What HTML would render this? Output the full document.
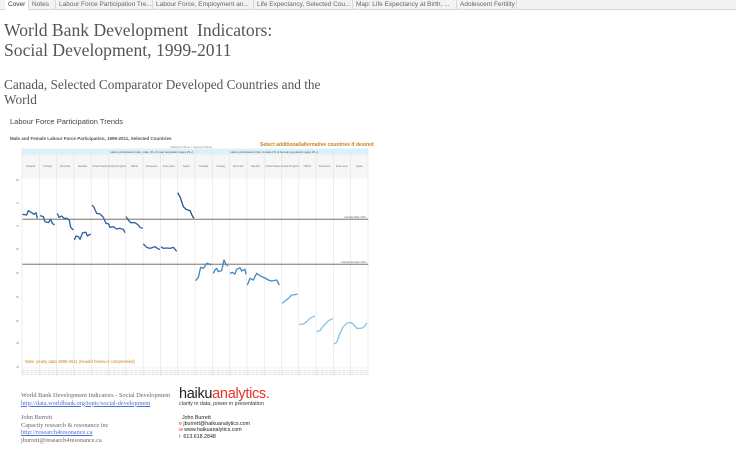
<!DOCTYPE html>
<html><head><meta charset="utf-8"><style>
*{margin:0;padding:0;box-sizing:border-box}
body{width:736px;height:454px;background:#fff;position:relative;overflow:hidden;font-family:"Liberation Sans",sans-serif}
.tabs{position:absolute;left:0;top:0;width:736px;height:10px;background:#f3f3f3;border-bottom:1px solid #d8d8d8;font-size:6.5px;color:#666;white-space:nowrap}
.tab{position:absolute;top:0;height:10px;line-height:9px;padding-left:3px;border-right:1px solid #d8d8d8}
.t{position:absolute;font-family:"Liberation Serif",serif;color:#555;white-space:nowrap}
</style></head><body>
<div class="tabs">
<div class="tab" style="left:5px;width:24px;background:#fff;color:#333">Cover</div>
<div class="tab" style="left:29px;width:27px">Notes</div>
<div class="tab" style="left:56px;width:97px">Labour Force Participation Tre...</div>
<div class="tab" style="left:153px;width:101px">Labour Force, Employment an...</div>
<div class="tab" style="left:254px;width:99px">Life Expectancy, Selected Cou...</div>
<div class="tab" style="left:353px;width:104px">Map: Life Expectancy at Birth, ...</div>
<div class="tab" style="left:457px;width:60px">Adolescent Fertility</div>
</div>
<div class="t" style="left:4px;top:21px;font-size:17.6px;line-height:19.5px">World Bank Development&nbsp; Indicators:<br>Social Development, 1999-2011</div>
<div class="t" style="left:4px;top:77px;font-size:13.3px;line-height:15px">Canada, Selected Comparator Developed Countries and the<br>World</div>
<div style="position:absolute;left:10px;top:117px;font-size:7.5px;color:#444">Labour Force Participation Trends</div>
<div style="position:absolute;left:10px;top:136px;font-size:4.5px;color:#555;font-weight:bold">Male and Female Labour Force Participation, 1999-2011, Selected Countries</div>
<div style="position:absolute;left:170px;top:145px;font-size:3px;color:#888">Indicator Name / Country Name</div>
<div style="position:absolute;left:260px;top:142px;font-size:5px;color:#c8801c;font-weight:bold">Select additional/alternative countries if desired</div>
<svg style="position:absolute;left:10px;top:140px" width="370" height="240" viewBox="0 0 370 240">
<rect x="12" y="8.5" width="346" height="6" fill="#dcf0f8"/>
<rect x="12" y="14.5" width="346" height="24" fill="#f6f6f6"/>
<text x="100" y="13" font-size="3" fill="#555" font-family="Liberation Sans">Labor participation rate, male (% of male population ages 15+)</text>
<text x="220" y="13" font-size="3" fill="#555" font-family="Liberation Sans">Labor participation rate, female (% of female population ages 15+)</text>
<g stroke="#e2e2e2" stroke-width="0.6">
<line x1="12" y1="8" x2="12" y2="237"/><line x1="29.3" y1="14" x2="29.3" y2="237"/><line x1="46.6" y1="14" x2="46.6" y2="237"/><line x1="63.9" y1="14" x2="63.9" y2="237"/><line x1="81.2" y1="14" x2="81.2" y2="237"/><line x1="98.5" y1="14" x2="98.5" y2="237"/><line x1="115.8" y1="14" x2="115.8" y2="237"/><line x1="133.1" y1="14" x2="133.1" y2="237"/><line x1="150.4" y1="14" x2="150.4" y2="237"/><line x1="167.7" y1="14" x2="167.7" y2="237"/><line x1="185" y1="8" x2="185" y2="237"/><line x1="202.3" y1="14" x2="202.3" y2="237"/><line x1="219.6" y1="14" x2="219.6" y2="237"/><line x1="236.9" y1="14" x2="236.9" y2="237"/><line x1="254.2" y1="14" x2="254.2" y2="237"/><line x1="271.5" y1="14" x2="271.5" y2="237"/><line x1="288.8" y1="14" x2="288.8" y2="237"/><line x1="306.1" y1="14" x2="306.1" y2="237"/><line x1="323.4" y1="14" x2="323.4" y2="237"/><line x1="340.7" y1="14" x2="340.7" y2="237"/><line x1="358" y1="8" x2="358" y2="237"/>
<line x1="12" y1="228" x2="358" y2="228"/>
</g>
<g font-size="2.6" fill="#777" font-family="Liberation Sans" text-anchor="middle">
<text x="20.6" y="27">Canada</text><text x="37.9" y="27">Norway</text><text x="55.2" y="27">Denmark</text><text x="72.5" y="27">Sweden</text><text x="89.8" y="27">United States</text><text x="107.1" y="27">United Kingdom</text><text x="124.4" y="27">OECD</text><text x="141.7" y="27">European</text><text x="159" y="27">Euro area</text><text x="176.3" y="27">Japan</text>
<text x="193.6" y="27">Canada</text><text x="210.9" y="27">Norway</text><text x="228.2" y="27">Denmark</text><text x="245.5" y="27">Sweden</text><text x="262.8" y="27">United States</text><text x="280.1" y="27">United Kingdom</text><text x="297.4" y="27">OECD</text><text x="314.7" y="27">European</text><text x="332" y="27">Euro area</text><text x="349.3" y="27">Japan</text>
</g>
<g font-size="2.6" fill="#888" font-family="Liberation Sans" text-anchor="end">
<text x="9" y="41">80</text><text x="9" y="64">75</text><text x="9" y="87">70</text><text x="9" y="110">65</text><text x="9" y="134">60</text><text x="9" y="158">55</text><text x="9" y="182">50</text><text x="9" y="204">45</text><text x="9" y="228">40</text>
</g>
<text x="356" y="78" font-size="2.6" fill="#666" text-anchor="end" font-family="Liberation Sans">Canada Male 2011</text>
<text x="356" y="123" font-size="2.6" fill="#666" text-anchor="end" font-family="Liberation Sans">Canada Female 2011</text>
<text x="15" y="223" font-size="4.2" fill="#c8801c" font-family="Liberation Sans">Note: yearly data 1999-2011 (header below is compressed)</text>
<path d="M12 230.5H358M12 232.5H358M12 234.5H358" stroke="#bbb" stroke-width="0.8" stroke-dasharray="0.6 0.7"/>
</svg>
<svg style="position:absolute;left:10px;top:170px" width="370" height="210" viewBox="0 0 1110 630" fill="none" stroke-width="4" stroke-linejoin="round">
<line x1="37" y1="148" x2="1075" y2="148" stroke="#999" stroke-width="4"/>
<line x1="37" y1="283" x2="1075" y2="283" stroke="#999" stroke-width="4"/>
<g stroke="#2f629e">
<polyline points="37,133 50,135 55,122 65,128 72,133 78,128 82,145"/>
<polyline points="90,137 100,140 105,155 115,158 122,148 127,160 134,165"/>
<polyline points="142,130 147,142 155,138 162,145 170,145 178,150 182,172 190,180"/>
<polyline points="193,210 198,198 205,200 210,208 218,188 228,187 232,198 242,192"/>
<polyline points="246,105 252,112 260,130 270,132 280,142 288,160 296,162 300,172 310,170 320,177 330,175 340,178 345,188"/>
<polyline points="348,140 355,150 362,158 375,158 385,165 390,172 398,175"/>
<polyline points="400,222 410,232 420,235 435,230 445,237 450,238"/>
<polyline points="453,230 460,235 470,234 480,235 490,232 500,244"/>
<polyline points="503,68 510,80 520,110 528,118 540,122 548,140 552,145" stroke="#264f86"/>
</g>
<g stroke="#4a86bd">
<polyline points="557,332 565,322 572,292 580,295 590,280 598,282 604,285"/>
<polyline points="610,310 615,300 620,295 625,305 635,302 642,270 648,283 654,288"/>
<polyline points="660,310 667,307 675,312 680,298 690,293 695,303 705,298 708,313"/>
<polyline points="712,345 720,325 730,330 740,310 748,316 755,320 765,324 775,330 785,333 800,330 808,345"/>
</g>
<polyline stroke="#6aa7d3" points="817,400 825,393 835,385 845,375 855,374 863,372"/>
<g stroke="#8cc3e4">
<polyline points="868,463 880,462 890,455 900,445 915,438"/>
<polyline points="920,485 930,482 940,468 955,452 968,446"/>
<polyline points="972,522 980,517 990,490 1000,470 1010,460 1020,457 1030,462 1040,475 1055,475 1065,468 1070,458"/>
</g>
</svg>
<div class="t" style="left:21px;top:392px;font-size:6.3px;line-height:7.5px;color:#666">World Bank Development Indicators - Social Development<br><span style="color:#4a6fd0;text-decoration:underline">http://data.worldbank.org/topic/social-development</span></div>
<div class="t" style="left:21px;top:414px;font-size:6.3px;line-height:7.5px;color:#666">John Burrett<br>Capacity research &amp; resonance inc<br><span style="color:#4a6fd0;text-decoration:underline">http://research4resonance.ca</span><br>jburrett@research4resonance.ca</div>
<div style="position:absolute;left:179px;top:386px;font-size:14.5px;letter-spacing:-0.3px;line-height:16px"><span style="color:#222">haiku</span><span style="color:#e8322b">analytics.</span></div>
<div style="position:absolute;left:179px;top:401px;font-size:5.3px;color:#333">clarity in data, power in presentation</div>
<div style="position:absolute;left:179px;top:415px;font-size:5.3px;line-height:6.2px;color:#222">&nbsp;&nbsp;John Burrett<br><span style="color:#e8322b">e</span> jburrett@haikuanalytics.com<br><span style="color:#e8322b">w</span> www.haikuanalytics.com<br><span style="color:#e8322b">t</span>&nbsp; 613.618.2848</div>
</body></html>
